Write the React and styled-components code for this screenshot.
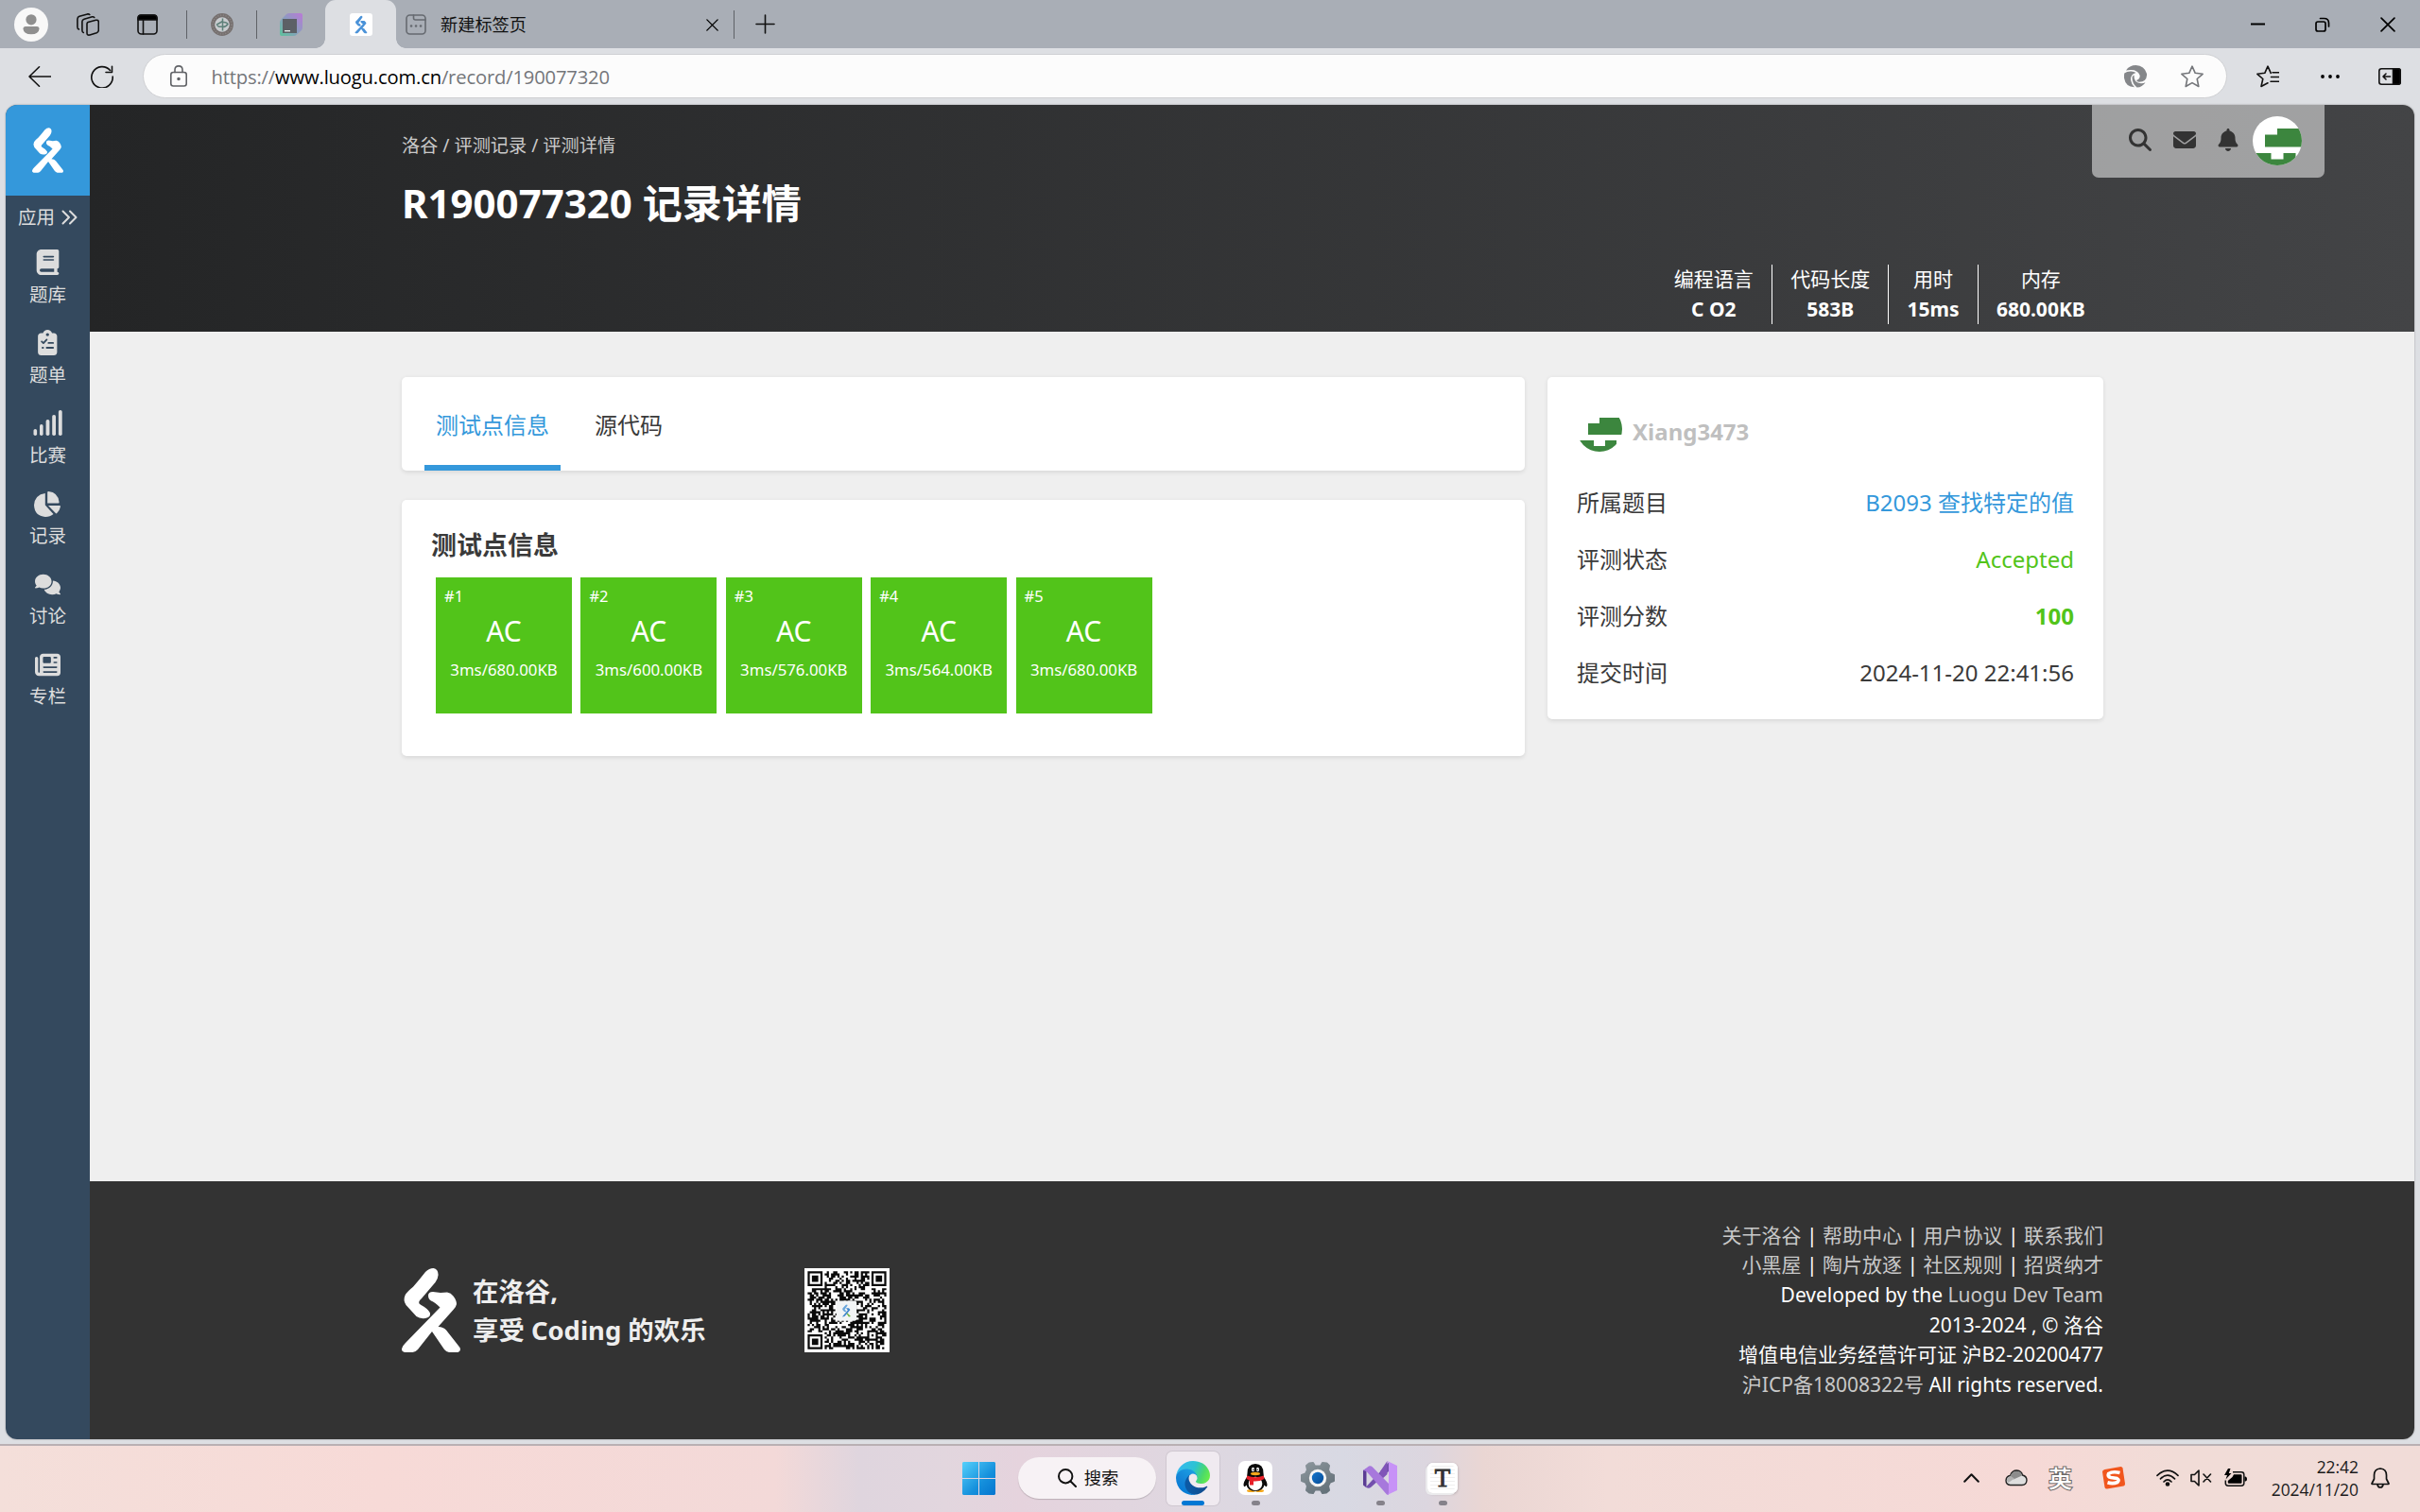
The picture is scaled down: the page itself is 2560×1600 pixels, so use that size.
import React from 'react';
import styled, { createGlobalStyle, css } from 'styled-components';
import {
  FaBook,
  FaComments,
  FaNewspaper,
  FaMagnifyingGlass,
  FaEnvelope,
  FaBell,
} from 'react-icons/fa6';

const GlobalStyle = createGlobalStyle`
  * { box-sizing: border-box; }
  body {
    margin: 0;
    font-family: "Noto Sans", "Noto Sans CJK SC", sans-serif;
    color: #3a3a3a;
    overflow: hidden;
  }
  svg { display: block; flex: none; }
`;

/* ---------- browser chrome ---------- */

const Desktop = styled.div`
  width: 2560px;
  height: 1600px;
  display: flex;
  flex-direction: column;
  background: #dddfe3;
`;

const TabStrip = styled.div`
  height: 51px;
  flex: none;
  display: flex;
  align-items: center;
  background: #a9aeb6;
`;

const Item = styled.span`
  display: flex;
  flex: none;
  margin-left: ${(p) => p.$gap || 0}px;
  margin-top: ${(p) => p.$drop || 0}px;
`;

const TabDivider = styled.span`
  width: 1.5px;
  height: 30px;
  flex: none;
  margin-left: ${(p) => p.$gap}px;
  background: #5f6267;
`;

const ActiveTab = styled.div`
  position: relative;
  align-self: stretch;
  width: 75.5px;
  margin-left: 23.5px;
  display: flex;
  align-items: center;
  justify-content: center;
  padding: 1px 0 0 2px;
  background: #dddfe3;
  border-radius: 11px 11px 0 0;
  &::before,
  &::after {
    content: '';
    position: absolute;
    bottom: 0;
    width: 10px;
    height: 10px;
  }
  &::before {
    left: -10px;
    background: radial-gradient(circle at 0 0, transparent 9.5px, #dddfe3 10px);
  }
  &::after {
    right: -10px;
    background: radial-gradient(circle at 100% 0, transparent 9.5px, #dddfe3 10px);
  }
`;

const TabTitle = styled.span`
  width: 281px;
  margin-left: 15px;
  font-size: 18.2px;
  line-height: 24px;
  color: #111;
`;

const WindowButtons = styled.div`
  margin-left: auto;
  padding-right: 26px;
  display: flex;
  align-items: center;
  gap: 53px;
`;

const Toolbar = styled.div`
  height: 60px;
  flex: none;
  display: flex;
  align-items: center;
  padding-bottom: 1px;
`;

const AddressBar = styled.div`
  width: 2205px;
  height: 47px;
  margin-left: 30.5px;
  padding: 0 24px 0 28px;
  display: flex;
  align-items: center;
  border: 1.5px solid #cfd0d3;
  border-radius: 24px;
  background: #fcfcfc;
`;

const Url = styled.span`
  margin-left: 26px;
  flex: 1;
  font-family: "Open Sans", "Noto Sans", sans-serif;
  font-size: 20.2px;
  letter-spacing: -0.16px;
  line-height: 28px;
  color: #74767a;
  b { font-weight: 400; color: #000; }
`;

const PageFrame = styled.div`
  height: 1412px;
  flex: none;
  margin: 0 6px;
  display: flex;
  border-radius: 12px;
  overflow: hidden;
  background: #efefef;
  box-shadow: 0 0 2px rgba(0, 0, 0, 0.35);
`;

/* ---------- side navigation ---------- */

const SideNav = styled.nav`
  width: 89px;
  flex: none;
  display: flex;
  flex-direction: column;
  align-items: center;
  background: #34495e;
  color: #ddd;
`;

const LogoTile = styled.div`
  align-self: stretch;
  height: 96px;
  display: flex;
  align-items: center;
  justify-content: center;
  background: #3498db;
`;

const AppsLink = styled.div`
  margin-top: 8px;
  height: 30px;
  display: flex;
  align-items: center;
  gap: 7px;
  font-size: 19.5px;
  line-height: 30px;
`;

const NavList = styled.div`
  margin-top: 18px;
  display: flex;
  flex-direction: column;
`;

const NavEntry = styled.a`
  height: 85.2px;
  display: flex;
  flex-direction: column;
  align-items: center;
  font-size: 19.5px;
  line-height: 30px;
`;

const NavIcon = styled.span`
  height: 29px;
  margin-bottom: 4.5px;
  display: flex;
  align-items: center;
  justify-content: center;
  font-size: 27px;
`;

/* ---------- page ---------- */

const Page = styled.div`
  flex: 1;
  display: flex;
  flex-direction: column;
`;

const Header = styled.header`
  position: relative;
  height: 240px;
  padding: 28px 329px 0 330px;
  display: flex;
  flex-direction: column;
  background: linear-gradient(90deg, #242526, #434446);
  color: #fff;
`;

const Crumbs = styled.div`
  font-size: 19.2px;
  line-height: 30px;
  color: #c9c9c9;
`;

const PageTitle = styled.h1`
  margin: 16px 0 0;
  font-size: 42px;
  line-height: 60px;
  font-weight: 700;
`;

const Stats = styled.div`
  margin-top: 35px;
  display: flex;
  justify-content: flex-end;
`;

const Stat = styled.div`
  height: 63px;
  padding: 0 19.2px;
  text-align: center;
  font-size: 21px;
  line-height: 31.5px;
  border-right: 1px solid #fff;
  &:last-child { border-right: 0; }
`;

const UserBar = styled.div`
  position: absolute;
  top: 0;
  right: 95px;
  width: 246px;
  height: 77px;
  padding: 0 24px 4px 39px;
  display: flex;
  align-items: center;
  border-radius: 0 0 7px 7px;
  background: rgba(255, 255, 255, 0.5);
  color: #333;
  font-size: 24px;
`;

const RoundAvatar = styled.svg`
  width: ${(p) => p.$size}px;
  height: ${(p) => p.$size}px;
  border-radius: 50%;
  background: #fff;
`;

const Content = styled.main`
  flex: 1;
  padding: 48px 329px 0 330px;
  display: flex;
  align-items: flex-start;
  gap: 24px;
`;

const MainColumn = styled.div`
  width: 1188px;
  display: flex;
  flex-direction: column;
  gap: 31px;
`;

const Card = styled.section`
  background: #fff;
  border-radius: 5px;
  box-shadow: 0 1.5px 4px rgba(26, 26, 26, 0.1);
`;

const TabCard = styled(Card)`
  height: 99px;
  padding: 0 24px;
  display: flex;
`;

const PageTab = styled.a`
  padding: 0 12px;
  margin-right: 24px;
  font-size: 24px;
  line-height: 101px;
  color: ${(p) => (p.$active ? '#3498db' : '#3a3a3a')};
  ${(p) => p.$active && css`box-shadow: inset 0 -6px 0 #3498db;`}
`;

const CaseCard = styled(Card)`
  height: 271px;
  padding: 28px 31px;
`;

const CaseHeading = styled.h3`
  margin: 0;
  font-size: 27px;
  line-height: 40px;
`;

const CaseRow = styled.div`
  margin: 14px 0 0 5px;
  display: flex;
  gap: 9.4px;
`;

const CaseBox = styled.div`
  width: 144px;
  height: 144px;
  padding-top: 8px;
  display: flex;
  flex-direction: column;
  background: #52c41a;
  color: #fff;
  text-align: center;
`;

const CaseId = styled.span`
  padding-left: 9px;
  text-align: left;
  font-size: 16.5px;
  line-height: 24px;
`;

const CaseStatus = styled.span`
  margin-top: 3px;
  font-size: 30px;
  line-height: 44px;
`;

const CaseUsage = styled.span`
  margin-top: 7px;
  font-size: 16.8px;
  line-height: 24px;
`;

const InfoCard = styled(Card)`
  width: 588px;
  height: 362px;
  padding: 31px 31px 0;
  display: flex;
  flex-direction: column;
`;

const UserRow = styled.div`
  height: 48px;
  flex: none;
  margin-bottom: 24px;
  display: flex;
  align-items: center;
  gap: 11px;
  font-size: 24px;
  font-weight: 700;
  color: #bfbfbf;
  span { padding-top: 4px; }
`;

const InfoRow = styled.div`
  height: 60px;
  flex: none;
  display: flex;
  align-items: center;
  justify-content: space-between;
  font-size: 24px;
  line-height: 36px;
`;

const InfoValue = styled.span`
  color: ${(p) => p.$color || '#3a3a3a'};
  font-weight: ${(p) => (p.$bold ? 700 : 400)};
`;

/* ---------- footer ---------- */

const Footer = styled.footer`
  height: 273px;
  padding: 0 329px 0 330px;
  display: flex;
  align-items: center;
  background: #333;
  color: #eee;
`;

const Slogan = styled.div`
  width: 351px;
  margin-left: 13px;
  font-size: 27.4px;
  line-height: 41px;
  font-weight: 700;
`;

const FooterLinks = styled.div`
  margin-left: auto;
  text-align: right;
  font-size: 21px;
  line-height: 31.6px;
  color: #fff;
  a { color: #c8c8c8; }
`;

/* ---------- taskbar ---------- */

const Taskbar = styled.div`
  height: 72px;
  margin-top: 5px;
  padding-bottom: 2px;
  flex: none;
  display: flex;
  align-items: center;
  border-top: 2px solid #b9b0b3;
  background: linear-gradient(
    90deg,
    #f4dfda 0,
    #f7dad7 400px,
    #f3d9d8 820px,
    #dfd5de 910px,
    #e2d6de 1000px,
    #e5d3dd 1080px,
    #dfd7e0 1250px,
    #d8d9e3 1420px,
    #dcd6df 1510px,
    #ead6d3 1570px,
    #f2dcd8 1700px,
    #f6d9d6 2150px,
    #f1dcd7 2300px,
    #f1dcd8 2560px
  );
`;

const SearchPill = styled.div`
  width: 146px;
  height: 44px;
  margin-left: 24px;
  padding-left: 2px;
  display: flex;
  align-items: center;
  justify-content: center;
  gap: 8px;
  border-radius: 22px;
  background: #f7f2f5;
  box-shadow: 0 1px 1px rgba(0, 0, 0, 0.18);
  font-size: 18.3px;
  line-height: 26px;
  color: #111;
`;

const TaskApp = styled.div`
  width: 56px;
  height: 57px;
  margin-left: ${(p) => p.$gap}px;
  padding-top: 10px;
  display: flex;
  flex-direction: column;
  align-items: center;
  border-radius: 6px;
  ${(p) => p.$active && css`
    background: #f0eaf0;
    box-shadow: 0 0 0 1px rgba(0, 0, 0, 0.07);
  `}
`;

const RunMark = styled.span`
  width: ${(p) => (p.$active ? 24 : 9)}px;
  height: 5px;
  margin-top: 6px;
  border-radius: 3px;
  background: ${(p) => (p.$active ? '#0078d4' : '#85828a')};
`;

const Tray = styled.div`
  margin-left: auto;
  padding-right: 32px;
  display: flex;
  align-items: center;
`;

const ImeMark = styled.span`
  margin: -2px 0 0 22px;
  font-family: "Noto Sans CJK SC", sans-serif;
  font-size: 25px;
  line-height: 32px;
  font-weight: 500;
  color: #fff;
  -webkit-text-stroke: 2px #6b6766;
  paint-order: stroke fill;
`;

const Clock = styled.div`
  width: 100px;
  margin: -1px 0 0 18px;
  text-align: right;
  font-family: "Open Sans", "Noto Sans", sans-serif;
  font-size: 17.4px;
  line-height: 24px;
  color: #1b1b1b;
`;

/* ---------- drawings ---------- */

function LuoguLogo({ width, height, fill = '#fff' }) {
  return (
    <svg width={width} height={height} viewBox="0 0 62 89" fill={fill}>
      <path d="M25 4Q29 0 33.5 0Q38.6 1 38.6 7Q38.4 11 35.5 15L21 32Q15.500 36.500 20.500 39Q28 43 30 47.500Q30.500 52 25 53Q19 53.700 15.500 51L4.500 39Q1 34 3.800 28Q6 24.500 12 19.700Q18 13 25 4Z" />
      <path d="M28 29Q28 25 33 25L41 26L48 25.400Q52 26 54.500 29.500Q58 34 58 38Q57.500 41 54.500 44L38.500 62Q44 62 47 65.500L61.500 84Q63 88 59.500 88.900L50 88.900Q47 88.500 45 86L32 67L17 86Q14.500 88.900 11.500 88.900L3 88.900Q-1 88 0.300 84.500Q1 82 4 79L40.500 41.500Q35 36 31 34.500Q28 32.500 28 29Z" />
    </svg>
  );
}

function Avatar({ size }) {
  return (
    <RoundAvatar $size={size} viewBox="0 0 8 8" fill="#3c863e">
      <path d="M4 2H8V5H2V3H4ZM0 6H3V7H5V6H7V8H0Z" />
    </RoundAvatar>
  );
}

function buildQrPath() {
  const n = 37;
  let seed = 20477;
  const next = () => {
    seed = (seed * 1103515245 + 12345) % 2147483648;
    return seed / 2147483648;
  };
  const finder = (x, y) => {
    for (const [ox, oy] of [[0, 0], [n - 7, 0], [0, n - 7]]) {
      const dx = x - ox;
      const dy = y - oy;
      if (dx >= -1 && dx <= 7 && dy >= -1 && dy <= 7) {
        const ring = Math.max(Math.abs(dx - 3), Math.abs(dy - 3));
        return ring === 3 || ring <= 1 ? 1 : 0;
      }
    }
    return -1;
  };
  let d = '';
  for (let y = 0; y < n; y += 1) {
    for (let x = 0; x < n; x += 1) {
      const r = next();
      const f = finder(x, y);
      let on = f === -1 ? r < 0.54 : f === 1;
      const ring = Math.max(Math.abs(x - 30), Math.abs(y - 30));
      if (ring <= 2) on = ring !== 1;
      if (on) d += `M${x} ${y}h1v1h-1z`;
    }
  }
  return d;
}

const QR_PATH = buildQrPath();

function QrCode() {
  return (
    <svg width="90" height="89" viewBox="-1.500 -1.500 40 40" preserveAspectRatio="none">
      <rect x="-1.500" y="-1.500" width="40" height="40" fill="#fff" />
      <path d={QR_PATH} fill="#0a0a0a" />
      <rect x="13.500" y="14" width="9.500" height="9.500" rx="0.800" fill="#f2f4f5" />
      <g transform="translate(16.200 15.800) scale(0.066)">
        <path fill="#6aa6dc" d="M25 4Q29 0 33.500 0Q38.600 1 38.600 7L21 32Q15.500 36.500 20.500 39Q28 43 30 47.500Q30.500 52 25 53L15.500 51L4.500 39Q1 34 3.800 28Z" />
        <path fill="#3f86cc" d="M28 25L48 25.400L58 38L36 65L17 86L0 88L40.500 41.500Z" />
        <path fill="#6cb33f" d="M38 62L62 86L48 89L32 67Z" />
      </g>
    </svg>
  );
}

const line = (extra = {}) => ({
  fill: 'none',
  stroke: '#111',
  strokeWidth: 1.6,
  strokeLinecap: 'round',
  strokeLinejoin: 'round',
  ...extra,
});

const ProfileIcon = () => (
  <svg width="36" height="36" viewBox="0 0 36 36">
    <circle cx="18" cy="18" r="18" fill="#f8f8f8" />
    <circle cx="18" cy="12.800" r="5.600" fill="#8f8f8f" />
    <path d="M9.500 22.500Q9.500 20 12 20H24Q26.500 20 26.500 22.500Q26 28.300 18 28.300Q10 28.300 9.500 22.500Z" fill="#8f8f8f" />
  </svg>
);

const WorkspacesIcon = () => (
  <svg width="24" height="24" viewBox="0 0 24 24" {...line()}>
    <path d="M12 9.500L20.500 7.300Q23.200 6.800 23.300 9.200V18Q23.200 20 21.300 20.700L14 23Q11 23.700 11 21V11.300Q11 10 12 9.500Z" />
    <path d="M7.300 20.500Q5.900 20 5.900 18V8.800Q6 6.800 8 6.200L16.500 3.800Q18 3.500 18.800 4.500" />
    <path d="M2.500 17Q0.900 16.500 0.900 14.500V6.200Q1 4 3 3.300L11.500 0.900Q13 0.600 13.800 1.500" />
  </svg>
);

const TabActionsIcon = () => (
  <svg width="22" height="22" viewBox="0 0 22 22" {...line()}>
    <rect x="1" y="1" width="20" height="20" rx="3.500" />
    <path d="M1 6V4Q1 1 4 1H18Q21 1 21 4V6Z" fill="#000" />
    <path d="M6.500 6V21" />
  </svg>
);

const SchoolFavicon = () => (
  <svg width="24" height="24" viewBox="0 0 24 24" fill="none">
    <circle cx="12" cy="12" r="9.800" stroke="#76706f" strokeWidth="4.200" />
    <circle cx="12" cy="12" r="10" stroke="#8f8a8a" strokeWidth="1.200" strokeDasharray="1.200 1.600" />
    <circle cx="12" cy="12" r="7.600" fill="#c9cccf" />
    <path d="M12.500 5.500V18.500M12.500 8.500L6.500 12Q7 15 12.500 14M12.500 9.500Q17 9 18 11.500Q16 14.500 12.500 14.500" stroke="#5f817a" strokeWidth="1.500" />
  </svg>
);

const ToolboxFavicon = () => (
  <svg width="24" height="24" viewBox="0 0 24 24">
    <defs>
      <linearGradient id="tb" x1="0" y1="1" x2="1" y2="0">
        <stop offset="0" stopColor="#5cc39b" />
        <stop offset="0.500" stopColor="#8b9cc0" />
        <stop offset="1" stopColor="#bb78d8" />
      </linearGradient>
    </defs>
    <path d="M7 1Q8.500 0 10 0H22Q24 0 24 2V15Q24 17 22.500 18.500L18 22.500Q16.500 24 14.500 24H2Q0 24 0 22V10Q0 8 1.500 6.500Z" fill="url(#tb)" />
    <rect x="3" y="6" width="15" height="15" fill="#5c6066" />
    <rect x="5" y="18" width="6" height="1.400" fill="#e8e8e8" />
  </svg>
);

const LuoguFavicon = () => (
  <svg width="24" height="24" viewBox="0 0 24 24">
    <rect width="24" height="24" rx="3" fill="#fff" />
    <g transform="translate(5.500 2.800) scale(0.207)" fill="#4a92d8">
      <path d="M25 4Q29 0 33.500 0Q38.600 1 38.600 7L21 32Q15.500 36.500 20.500 39Q28 43 30 47.500Q30.500 52 25 53Q19 53.700 15.500 51L4.500 39Q1 34 3.800 28Q6 24.500 12 19.700Z" />
      <path d="M28 29Q28 25 33 25L48 25.400Q58 34 58 38L38.500 62Q44 62 47 65.500L61.500 84Q63 88 59.500 88.900H50L45 86L32 67L17 86Q14.500 88.900 11.500 88.900H3Q-1 88 0.300 84.500L40.500 41.500L31 34.500Z" />
    </g>
  </svg>
);

const NewTabIcon = () => (
  <svg width="22" height="22" viewBox="0 0 22 22" {...line({ stroke: '#666a70' })}>
    <rect x="1" y="1" width="20" height="20" rx="3.500" />
    <path d="M8.500 1V4Q8.500 6 10.500 6H21" />
    <path d="M6 12.500h.1M11 12.500h.1M16 12.500h.1" strokeWidth="2.600" />
  </svg>
);

const CloseIcon = ({ size }) => (
  <svg width={size} height={size} viewBox="0 0 15 15" {...line({ stroke: '#000' })}>
    <path d="M1 1L14 14M14 1L1 14" />
  </svg>
);

const PlusIcon = () => (
  <svg width="21" height="21" viewBox="0 0 21 21" {...line()}>
    <path d="M10.500 1V20M1 10.500H20" />
  </svg>
);

const MinimizeIcon = () => (
  <svg width="15" height="16" viewBox="0 0 15 16">
    <rect y="6.500" width="15" height="2" fill="#000" />
  </svg>
);

const RestoreIcon = () => (
  <svg width="16" height="16" viewBox="0 0 16 16" {...line({ stroke: '#000', strokeWidth: 1.700 })}>
    <rect x="1" y="5" width="10" height="10" rx="2" />
    <path d="M5.500 1.500H9.500Q14.500 1.500 14.500 6.500V10" />
  </svg>
);

const BackIcon = () => (
  <svg width="24" height="24" viewBox="0 0 24 24" {...line()}>
    <path d="M23.500 12H1M11.500 1.800L1 12L11.500 22.200" />
  </svg>
);

const ReloadIcon = () => (
  <svg width="24" height="24" viewBox="0 0 24 24" {...line()}>
    <path d="M22.500 7.500V1.200M22.500 7.500H16M20.500 5.500A11.200 11.200 0 1 0 23.200 12" />
  </svg>
);

const LockIcon = () => (
  <svg width="18" height="23" viewBox="0 0 18 23" {...line({ stroke: '#606266' })}>
    <rect x="0.800" y="7.500" width="16.400" height="14.500" rx="2.500" />
    <path d="M5 7.500V4.800Q5 0.900 9 0.900Q13 0.900 13 4.800V7.500" />
    <circle cx="9" cy="14.500" r="1" fill="#606266" />
  </svg>
);

const SwirlIcon = () => (
  <svg width="24" height="24" viewBox="0 0 24 24" fill="#85878a">
    <path d="M2 5.500Q5.500 0 12.500 0Q21.500 0.500 24 9Q24.500 17.500 16 17.800Q13.500 17.500 13 16Q17.500 14.500 16.500 10.500Q14 4.500 6.500 5Q4 5 2 5.500Z" />
    <path d="M0.300 8.500Q3 6.300 7.500 6.500Q10.500 6.700 12.500 8Q6.800 9.500 7 15.500Q7.800 20.500 11 23.300Q1.500 23 0 13.500Q-0.200 11 0.300 8.500Z" />
    <path d="M8.500 13Q8.700 11 10.500 10.500Q10 18.800 18 19.300Q20.500 19.300 22.500 18.200Q19.500 23.300 13.500 23.500Q8.500 19.500 8.500 13Z" />
  </svg>
);

const STAR = 'M12 1.200L15.200 8.300L23.100 9.300L17.200 14.500L18.800 22.500L12 18.600L5.200 22.500L6.800 14.500L0.900 9.300L8.800 8.300Z';

const StarIcon = () => (
  <svg width="24" height="24" viewBox="0 0 24 24" {...line({ stroke: '#74767a' })}>
    <path d={STAR} />
  </svg>
);

const FavoritesIcon = () => (
  <svg width="24" height="24" viewBox="0 0 24 24" {...line()}>
    <path d="M12 18.800L5 22.500L6.800 14.500L0.900 9.300L8.800 8.300L12 1.200L15.200 8.300M15.500 12.500H23.500M17 7.800H23.500M15 17.300H23.500" />
  </svg>
);

const MoreIcon = () => (
  <svg width="20" height="6" viewBox="0 0 20 6">
    <circle cx="2" cy="3" r="1.900" />
    <circle cx="10" cy="3" r="1.900" />
    <circle cx="18" cy="3" r="1.900" />
  </svg>
);

const SidebarIcon = () => (
  <svg width="24" height="18" viewBox="0 0 24 18" {...line()}>
    <rect x="0.800" y="0.800" width="22.400" height="16.400" rx="2.500" />
    <path d="M15.500 0.800H21Q23.200 0.800 23.200 3V15Q23.200 17.200 21 17.200H15.500Z" fill="#000" />
    <path d="M12.500 9H5.500M8 6L5 9L8 12" />
  </svg>
);

const DoubleAngle = () => (
  <svg width="17" height="16" viewBox="0 0 17 16" {...line({ stroke: '#ddd', strokeWidth: 2 })}>
    <path d="M1.500 1.500L8 8L1.500 14.500M9 1.500L15.500 8L9 14.500" />
  </svg>
);

const ChecklistIcon = () => (
  <svg width="20.500" height="27" viewBox="0 0 384 512">
    <path fill="#ddd" d="M192 0c-41.800 0-77.400 26.700-90.500 64H64C28.700 64 0 92.700 0 128v320c0 35.300 28.700 64 64 64h256c35.300 0 64-28.700 64-64V128c0-35.300-28.700-64-64-64h-37.500C269.400 26.700 233.800 0 192 0z" />
    <circle cx="192" cy="96" r="32" fill="#34495e" />
    <path d="M76 236l34 32 66-72M212 264h92M176 360h128M92 360h12" fill="none" stroke="#34495e" strokeWidth="34" strokeLinecap="round" strokeLinejoin="round" />
  </svg>
);

const BarsIcon = () => (
  <svg width="31" height="27" viewBox="0 0 31 27" fill="#ddd">
    <rect x="0.500" y="20" width="3.600" height="7" rx="1.800" />
    <rect x="7" y="15" width="3.600" height="12" rx="1.800" />
    <rect x="13.600" y="10" width="3.800" height="17" rx="1.800" />
    <rect x="20.200" y="5" width="3.800" height="22" rx="1.800" />
    <rect x="26.900" y="0" width="3.800" height="27" rx="1.800" />
  </svg>
);

const PieIcon = () => (
  <svg width="28" height="27" viewBox="0 0 28 27" fill="#ddd">
    <path d="M11.800 2V14.500L20.500 24Q17 27 12 27Q0.500 26 0 14.500Q0.800 3.500 11.800 2Z" />
    <path d="M14.200 0.800Q14.300 0 15.200 0Q25.600 1 26.600 11.500Q26.600 12.400 25.700 12.400H14.200Z" />
    <path d="M15 15H27Q28 15 28 16Q27.300 20 24 23.300Q23.400 23.700 22.800 23.100Z" />
  </svg>
);

const NAV = [
  ['题库', <FaBook key="i" />],
  ['题单', <ChecklistIcon key="i" />],
  ['比赛', <BarsIcon key="i" />],
  ['记录', <PieIcon key="i" />],
  ['讨论', <FaComments key="i" />],
  ['专栏', <FaNewspaper key="i" />],
];

const STATS = [
  ['编程语言', 'C O2'],
  ['代码长度', '583B'],
  ['用时', '15ms'],
  ['内存', '680.00KB'],
];

const CASES = ['680.00KB', '600.00KB', '576.00KB', '564.00KB', '680.00KB'];

/* ---------- taskbar drawings ---------- */

const WindowsIcon = () => (
  <svg width="35" height="35" viewBox="0 0 35 35">
    <defs>
      <linearGradient id="win" gradientUnits="userSpaceOnUse" x1="0" y1="0" x2="35" y2="35">
        <stop offset="0" stopColor="#56d0fb" />
        <stop offset="0.600" stopColor="#1590dc" />
        <stop offset="1" stopColor="#0475cf" />
      </linearGradient>
    </defs>
    <path fill="url(#win)" d="M1 0H17V17H0V1ZM18 0H34L35 1V17H18ZM0 18H17V35H1L0 34ZM18 18H35V34L34 35H18Z" />
  </svg>
);

const TaskSearchIcon = () => (
  <svg width="20" height="20" viewBox="0 0 20 20" {...line({ strokeWidth: 2 })}>
    <circle cx="8.200" cy="8.200" r="7.200" />
    <path d="M13.500 13.500L19 19" />
  </svg>
);

const EdgeIcon = () => (
  <svg width="36" height="36" viewBox="0 0 256 256">
    <defs>
      <linearGradient id="e1" x1="0.200" y1="0.600" x2="1" y2="0.600">
        <stop offset="0" stopColor="#0c59a4" />
        <stop offset="1" stopColor="#114a8b" />
      </linearGradient>
      <linearGradient id="e2" x1="0.700" y1="0.100" x2="0.200" y2="1">
        <stop offset="0" stopColor="#1b9de2" />
        <stop offset="0.500" stopColor="#1484d7" />
        <stop offset="1" stopColor="#0078d4" />
      </linearGradient>
      <linearGradient id="e3" x1="0" y1="0.300" x2="1" y2="0.600">
        <stop offset="0" stopColor="#35b8f1" />
        <stop offset="0.500" stopColor="#2cc3d2" />
        <stop offset="0.800" stopColor="#4bd96b" />
        <stop offset="1" stopColor="#66eb4d" />
      </linearGradient>
    </defs>
    <path fill="url(#e1)" d="M231 190.500c-3.400 1.800-6.900 3.400-10.500 4.700a101.700 101.700 0 0 1-35.900 6.500c-47.300 0-88.500-32.500-88.500-74.300a31.500 31.500 0 0 1 16.400-27.300c-42.800 1.800-53.800 46.400-53.800 72.500 0 74 68.100 81.400 82.800 81.400 7.900 0 19.800-2.300 27-4.600l1.300-.4a128.300 128.300 0 0 0 66.600-52.800 4 4 0 0 0-5.400-5.700z" />
    <path fill="url(#e2)" d="M105.700 241.400a79.200 79.200 0 0 1-22.700-21.300 80.700 80.700 0 0 1 29.500-120c3.200-1.500 8.500-4.100 15.600-4a32.400 32.400 0 0 1 25.700 13 31.900 31.900 0 0 1 6.300 18.700c0-.2 24.500-79.600-80-79.600-43.900 0-80 41.700-80 78.200a130.200 130.200 0 0 0 12.100 56 128 128 0 0 0 156.400 67 75.600 75.600 0 0 1-62.900-8z" />
    <path fill="url(#e3)" d="M152.300 148.900c-.9 1-3.400 2.500-3.400 5.600 0 2.600 1.700 5.200 4.800 7.300 14.300 10 41.400 8.600 41.500 8.600a59.600 59.600 0 0 0 30.300-8.300 61.400 61.400 0 0 0 30.400-52.900c.3-22.400-8-37.300-11.300-43.900C223.500 23.900 177.700 0 128 0A128 128 0 0 0 0 126.200c.5-36.500 36.800-66 80-66 3.500 0 23.500.3 42 10a72.600 72.600 0 0 1 30.900 29.300c6.100 10.600 7.200 24.100 7.200 29.500 0 5.300-2.700 13.300-7.800 19.900z" />
  </svg>
);

const QqIcon = () => (
  <svg width="36" height="36" viewBox="0 0 36 36">
    <rect width="36" height="36" rx="7" fill="#fff" />
    <ellipse cx="13.500" cy="31.500" rx="4.500" ry="1.500" fill="#f5a81c" />
    <ellipse cx="22.500" cy="31.500" rx="4.500" ry="1.500" fill="#f5a81c" />
    <path d="M18 3Q26.500 3 26.500 13L27 17Q30.500 22 30.500 25.500Q30 29 27.500 25.500Q26 32 18 32Q10 32 8.500 25.500Q6 29 5.500 25.500Q5.500 22 9 17L9.500 13Q9.500 3 18 3Z" fill="#0a0a0a" />
    <ellipse cx="18" cy="24" rx="7.300" ry="7.200" fill="#fff" />
    <path d="M9.200 15.500Q18 19 26.800 15.500L27.500 19Q22 22 16 21.500V25.500H12V20.500L8.500 19Z" fill="#e81f28" />
    <ellipse cx="15.500" cy="9" rx="1.500" ry="2.200" fill="#fff" />
    <ellipse cx="20.500" cy="9" rx="1.500" ry="2.200" fill="#fff" />
    <circle cx="15.900" cy="9.300" r="0.700" />
    <circle cx="20.100" cy="9.300" r="0.700" />
    <ellipse cx="18" cy="13.500" rx="5" ry="1.700" fill="#f5a81c" />
  </svg>
);

const GearIcon = () => (
  <svg width="36" height="36" viewBox="0 0 36 36">
    <defs>
      <linearGradient id="gr" x1="0" y1="0" x2="0.700" y2="1">
        <stop offset="0" stopColor="#8d979d" />
        <stop offset="1" stopColor="#65727a" />
      </linearGradient>
      <linearGradient id="gb" x1="0" y1="0" x2="1" y2="1">
        <stop offset="0" stopColor="#1576cc" />
        <stop offset="1" stopColor="#064c97" />
      </linearGradient>
    </defs>
    <path fill="url(#gr)" stroke="url(#gr)" strokeWidth="2" strokeLinejoin="round" d="M9 2.500L13 2L15 5.500H21L23 2L27.500 2.500L30 5L29 9.500L31 13.500L35 15V21L31 22.500L29 26.500L30 31L27 33.500L23 34L21 30.500H15L13 34L9 33.500L6 31L7 26.500L5 22.500L1 21V15L5 13.500L7 9.500L6 5Z" />
    <circle cx="18" cy="18" r="9.200" fill="#f4f4f4" />
    <circle cx="18" cy="18" r="6.200" fill="url(#gb)" />
  </svg>
);

const VisualStudioIcon = () => (
  <svg width="36" height="36" viewBox="0 0 36 36">
    <path fill="#5b3d94" d="M0 10L3.500 8V28L0 25.500Z" />
    <path fill="#7350ad" d="M3 27.500L27 1.500V11L8 28Q5 30.500 0 25.500Z" />
    <path fill="#8054b8" d="M18 11L25.500 0V14L18 21Z" />
    <path fill="#a778dc" d="M0 10L6 5.500Q8 4.500 10 6.500L27 24V36L25 35.500L3.500 11Z" />
    <path fill="#c792f7" d="M25.500 0L36 5V31L25.500 36L27 34V2Z" />
  </svg>
);

const TyporaTile = styled.span`
  width: 32px;
  height: 32px;
  margin: 2px 0;
  display: flex;
  align-items: center;
  justify-content: center;
  border-radius: 6px;
  background: repeating-linear-gradient(#fff 0 3px, #efefef 3px 4px);
  box-shadow: inset 0 0 0 3px #fff, -2px 2px 0 #ebebed, 0 1px 3px rgba(0, 0, 0, 0.25);
  font-family: "Liberation Serif", serif;
  font-size: 27px;
  line-height: 32px;
  color: #333;
  -webkit-text-stroke: 1px #333;
`;

const UpIcon = () => (
  <svg width="17" height="10" viewBox="0 0 17 10" {...line({ strokeWidth: 2 })}>
    <path d="M1.200 8.800L8.500 1.300L15.800 8.800" />
  </svg>
);

const CloudIcon = () => (
  <svg width="24" height="18" viewBox="0 0 24 18">
    <path d="M5.500 16.500Q1 16 1 11.500Q1.500 7 5.500 6.500Q7.500 1 12.500 1Q17.500 1.500 18.500 6Q23 7 23 11.500Q22.500 16.500 18 16.500Z" fill="#dedede" stroke="#222" strokeWidth="1.400" />
    <path d="M5.500 6.800Q8 1.700 12.500 1.700Q17 2 18 6.500L9 10.500Z" fill="#8c8c8c" />
    <path d="M2 12Q2 7.500 6 7.200L10 9.500L3.500 14Z" fill="#b0b0b0" />
  </svg>
);

const SogouIcon = () => (
  <svg width="24" height="24" viewBox="0 0 24 24">
    <path d="M2.500 3L19.500 0Q21 0 21.500 1.500L24 18Q24 20 22.500 20.500L5 23.500Q3 23.500 2.500 22L0 5.500Q0 3.500 2.500 3Z" fill="#f1561d" />
    <path d="M18.500 6.500Q11 4.500 6.500 7.500Q5 10.500 9 11.500L15.500 12.500Q18.500 14 16 16.500Q11 18.500 5.500 16.800" fill="none" stroke="#fff" strokeWidth="3.600" />
  </svg>
);

const WifiIcon = () => (
  <svg width="24" height="18" viewBox="0 0 24 18" {...line({ strokeWidth: 1.700 })}>
    <path d="M1 6.300Q12 -4 23 6.300M4.500 9.800Q12 2.500 19.500 9.800M8 13Q12 8.800 16 13" />
    <circle cx="12" cy="15.500" r="1.500" fill="#111" />
  </svg>
);

const MuteIcon = () => (
  <svg width="23" height="18" viewBox="0 0 23 18" {...line({ strokeWidth: 1.600 })}>
    <path d="M1 5.500H4.500L9 1V17L4.500 12.500H1ZM14 5L21.500 13M21.500 5L14 13" />
  </svg>
);

const BatteryIcon = () => (
  <svg width="24" height="20" viewBox="0 0 24 20">
    <path d="M9 3.800H18Q20.800 3.800 20.800 6.500V15.500Q20.800 18.200 18 18.200H4Q1.300 18.200 1.300 15.500V12.500" fill="none" stroke="#111" strokeWidth="1.500" />
    <path d="M10 6.300H17.500Q18.500 6.300 18.500 7.300V14.700Q18.500 15.700 17.500 15.700H4.800Q3.800 15.700 3.800 14.700V13L8.500 9Z" />
    <path d="M21.500 8.500H22.500Q24 9 24 11Q24 13 22.500 13.500H21.500Z" />
    <path d="M4 0L0 7H3L1.500 11.500L7.500 5H4.800L6.500 0Z" />
  </svg>
);

const TrayBellIcon = () => (
  <svg width="20" height="22" viewBox="0 0 20 22" {...line({ strokeWidth: 1.700 })}>
    <path d="M10 1Q3.500 1.500 3.500 8V12L1 17Q1 17.500 1.500 17.500H18.500Q19 17.500 19 17L16.500 12V8Q16.500 1.500 10 1ZM7 18Q7.500 21 10 21Q12.500 21 13 18" />
  </svg>
);

export default function App() {
  return (
    <Desktop>
      <GlobalStyle />
      <TabStrip>
        <Item $gap={15} $drop={1}><ProfileIcon /></Item>
        <Item $gap={30}><WorkspacesIcon /></Item>
        <Item $gap={40}><TabActionsIcon /></Item>
        <TabDivider $gap={29.5} />
        <Item $gap={25} $drop={1}><SchoolFavicon /></Item>
        <TabDivider $gap={23.5} />
        <Item $gap={24} $drop={1}><ToolboxFavicon /></Item>
        <ActiveTab><LuoguFavicon /></ActiveTab>
        <Item $gap={10} $drop={1}><NewTabIcon /></Item>
        <TabTitle>新建标签页</TabTitle>
        <Item $drop={1}><CloseIcon size={13} /></Item>
        <TabDivider $gap={15.5} />
        <Item $gap={21.5} $drop={-1}><PlusIcon /></Item>
        <WindowButtons>
          <MinimizeIcon />
          <RestoreIcon />
          <CloseIcon size={16} />
        </WindowButtons>
      </TabStrip>

      <Toolbar>
        <Item $gap={30}><BackIcon /></Item>
        <Item $gap={42} $drop={1}><ReloadIcon /></Item>
        <AddressBar>
          <LockIcon />
          <Url>https://<b>www.luogu.com.cn</b>/record/190077320</Url>
          <SwirlIcon />
          <Item $gap={36}><StarIcon /></Item>
        </AddressBar>
        <Item $gap={31.500}><FavoritesIcon /></Item>
        <Item $gap={43.5}><MoreIcon /></Item>
        <Item $gap={41.5}><SidebarIcon /></Item>
      </Toolbar>

      <PageFrame>
        <SideNav>
          <LogoTile><LuoguLogo width={33} height={48} /></LogoTile>
          <AppsLink>应用<DoubleAngle /></AppsLink>
          <NavList>
            {NAV.map(([label, icon]) => (
              <NavEntry key={label}>
                <NavIcon>{icon}</NavIcon>
                {label}
              </NavEntry>
            ))}
          </NavList>
        </SideNav>

        <Page>
          <Header>
            <Crumbs>洛谷 / 评测记录 / 评测详情</Crumbs>
            <PageTitle>R190077320 记录详情</PageTitle>
            <Stats>
              {STATS.map(([label, value]) => (
                <Stat key={label}>
                  <div>{label}</div>
                  <strong>{value}</strong>
                </Stat>
              ))}
            </Stats>
            <UserBar>
              <FaMagnifyingGlass />
              <Item $gap={23}><FaEnvelope /></Item>
              <Item $gap={22}><FaBell /></Item>
              <Item $gap={14} $drop={3}><Avatar size={52} /></Item>
            </UserBar>
          </Header>

          <Content>
            <MainColumn>
              <TabCard>
                <PageTab $active>测试点信息</PageTab>
                <PageTab>源代码</PageTab>
              </TabCard>
              <CaseCard>
                <CaseHeading>测试点信息</CaseHeading>
                <CaseRow>
                  {CASES.map((memory, i) => (
                    <CaseBox key={i}>
                      <CaseId>#{i + 1}</CaseId>
                      <CaseStatus>AC</CaseStatus>
                      <CaseUsage>3ms/{memory}</CaseUsage>
                    </CaseBox>
                  ))}
                </CaseRow>
              </CaseCard>
            </MainColumn>

            <InfoCard>
              <UserRow><Avatar size={48} /><span>Xiang3473</span></UserRow>
              <InfoRow>所属题目<InfoValue $color="#3498db">B2093 查找特定的值</InfoValue></InfoRow>
              <InfoRow>评测状态<InfoValue $color="#52c41a">Accepted</InfoValue></InfoRow>
              <InfoRow>评测分数<InfoValue $color="#52c41a" $bold>100</InfoValue></InfoRow>
              <InfoRow>提交时间<InfoValue>2024-11-20 22:41:56</InfoValue></InfoRow>
            </InfoCard>
          </Content>

          <Footer>
            <LuoguLogo width={62} height={89} />
            <Slogan>在洛谷,<br />享受 Coding 的欢乐</Slogan>
            <QrCode />
            <FooterLinks>
              <div><a>关于洛谷</a> | <a>帮助中心</a> | <a>用户协议</a> | <a>联系我们</a></div>
              <div><a>小黑屋</a> | <a>陶片放逐</a> | <a>社区规则</a> | <a>招贤纳才</a></div>
              <div>Developed by the <a>Luogu Dev Team</a></div>
              <div>2013-2024 , © 洛谷</div>
              <div>增值电信业务经营许可证 沪B2-20200477</div>
              <div><a>沪ICP备18008322号</a> All rights reserved.</div>
            </FooterLinks>
          </Footer>
        </Page>
      </PageFrame>

      <Taskbar>
        <Item $gap={1018}><WindowsIcon /></Item>
        <SearchPill><TaskSearchIcon />搜索</SearchPill>
        <TaskApp $gap={11} $active><EdgeIcon /><RunMark $active /></TaskApp>
        <TaskApp $gap={10}><QqIcon /><RunMark /></TaskApp>
        <TaskApp $gap={10}><GearIcon /></TaskApp>
        <TaskApp $gap={10}><VisualStudioIcon /><RunMark /></TaskApp>
        <TaskApp $gap={10}><TyporaTile>T</TyporaTile><RunMark /></TaskApp>
        <Tray>
          <UpIcon />
          <Item $gap={27}><CloudIcon /></Item>
          <ImeMark>英</ImeMark>
          <Item $gap={32}><SogouIcon /></Item>
          <Item $gap={33}><WifiIcon /></Item>
          <Item $gap={12}><MuteIcon /></Item>
          <Item $gap={13}><BatteryIcon /></Item>
          <Clock>22:42<br />2024/11/20</Clock>
          <Item $gap={13}><TrayBellIcon /></Item>
        </Tray>
      </Taskbar>
    </Desktop>
  );
}
